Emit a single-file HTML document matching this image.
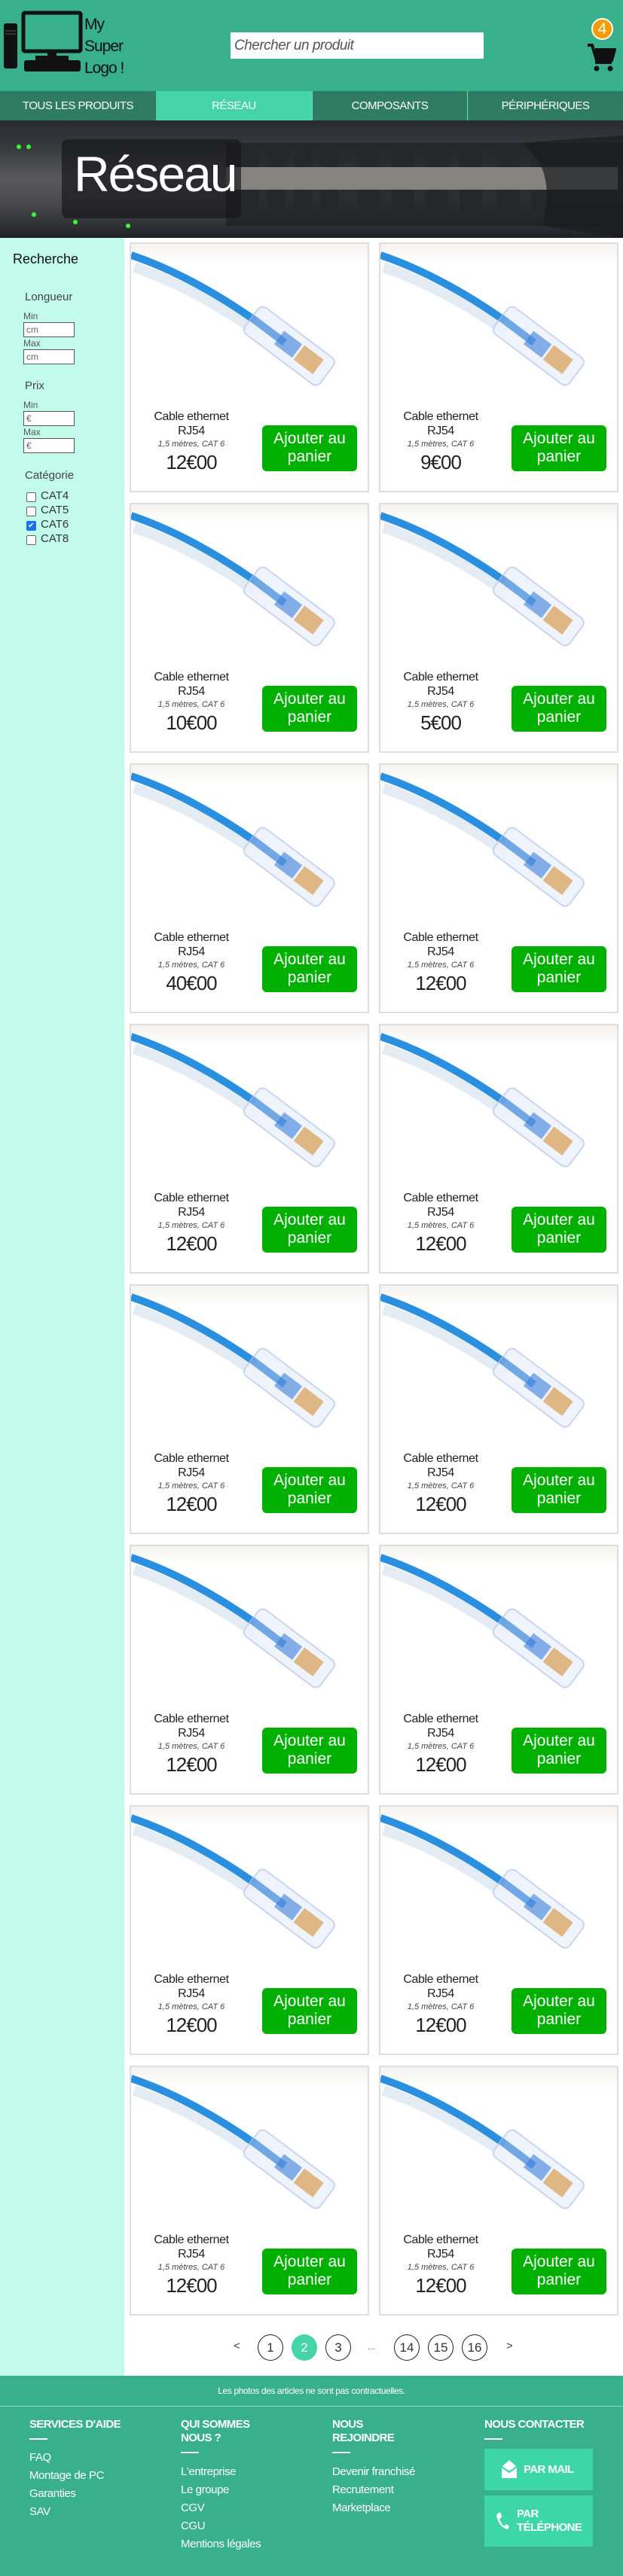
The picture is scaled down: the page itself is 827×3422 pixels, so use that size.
<!DOCTYPE html>
<html><head><meta charset="utf-8"><style>
*{margin:0;padding:0;box-sizing:border-box}
body{width:827px;height:3422px;position:relative;font-family:"Liberation Sans",sans-serif;background:#fff;overflow:hidden}
.a{position:absolute}
.hdr{left:0;top:0;width:827px;height:121px;background:#38b08c}
.nav{left:0;top:121px;width:827px;height:39px;background:#2f7c63;display:flex}
.nav div{height:39px;line-height:39px;text-align:center;color:#fff;font-size:15px;letter-spacing:-0.5px;border-left:1px solid #5ea;}
.ban{left:0;top:160px;width:827px;height:156px;background:linear-gradient(180deg,#2a2b30 0%,#3a3b40 25%,#5a5a5c 50%,#4a4a4e 70%,#202126 100%)}
.side{left:0;top:316px;width:165px;height:2840px;background:#c3fbea}
.card{width:318px;height:332px;border:2px solid #ddd;background:#fff;overflow:hidden}
.card .t{position:absolute;left:0;top:220px;width:160px;text-align:center;color:#222}
.btn{position:absolute;left:174px;top:241px;width:126px;height:61px;background:#00b000;border-radius:6px;color:#fff;font-size:21px;line-height:24px;text-align:center;padding-top:6px}
.inp{position:absolute;left:31px;width:68px;height:20px;border:1px solid #555;background:#fff;font-size:12px;color:#666;padding-left:3px;line-height:18px}
.lbl{position:absolute;left:31px;font-size:12px;color:#555}
.h{position:absolute;left:33px;font-size:15px;color:#444}
.cb{position:absolute;left:35px;width:13px;height:13px;border:1px solid #666;border-radius:2px;background:#fff}
.ct{position:absolute;left:54px;font-size:15px;color:#333}
.pg{position:absolute;top:3101px;width:34px;height:35px;border:1px solid #222;border-radius:50%;text-align:center;line-height:33px;font-size:17px;color:#333}
.ft{left:0;top:3156px;width:827px;height:266px;background:#38b08c;color:#fff}
.fh{position:absolute;font-size:15px;font-weight:bold;letter-spacing:-0.6px;line-height:18px}
.fb{position:absolute;width:24px;height:2px;background:#fff}
.fl{position:absolute;font-size:15px;line-height:24px;letter-spacing:-0.4px}
</style></head><body>
<div class="a hdr"></div>
<svg class="a" style="left:0;top:10px" width="110" height="90" viewBox="0 0 110 90">
<rect x="5" y="21" width="18" height="60" rx="3" fill="#111"/>
<rect x="7" y="30" width="14" height="2" fill="#333"/><rect x="7" y="34" width="14" height="2" fill="#333"/>
<rect x="31" y="7" width="76" height="51" rx="2" fill="none" stroke="#111" stroke-width="5"/>
<rect x="63" y="58" width="12" height="8" fill="#111"/><rect x="47" y="64" width="44" height="6" fill="#111"/>
<rect x="32" y="70" width="75" height="15" rx="3" fill="#111"/>
</svg>
<div class="a" style="left:112px;top:18px;font-size:21px;line-height:29px;color:#111;letter-spacing:-1px">My<br>Super<br>Logo !</div>
<div class="a" style="left:306px;top:43px;width:336px;height:35px;background:#fff;font-size:19px;font-style:italic;color:#555;line-height:35px;padding-left:5px;letter-spacing:-0.5px">Chercher un produit</div>
<div class="a" style="left:785px;top:24px;width:29px;height:29px;border-radius:50%;background:#f59a00;border:2px solid #fff;color:#fff;text-align:center;font-size:21px;line-height:25px">4</div>
<svg class="a" style="left:778px;top:56px" width="40" height="40" viewBox="0 0 40 40"><path d="M2 4h6l6 20h20l4-14H12" fill="none" stroke="#111" stroke-width="4"/><path d="M12 10h26l-4 14H14z" fill="#111"/><rect x="12" y="25" width="22" height="4" fill="#111"/><circle cx="14" cy="35" r="3.5" fill="#111"/><circle cx="32" cy="35" r="3.5" fill="#111"/></svg>
<div class="a nav"><div style="width:207px;border:none">TOUS LES PRODUITS</div><div style="width:207px;background:#45d4a8;border:none">RÉSEAU</div><div style="width:206px">COMPOSANTS</div><div style="width:207px">PÉRIPHÉRIQUES</div></div>
<div class="a ban"></div>
<svg class="a" style="left:0;top:160px" width="827" height="156">
<rect x="300" y="30" width="527" height="110" fill="#1e2024" opacity=".7"/>
<rect x="300" y="62" width="520" height="30" fill="#9a9894" opacity=".8"/>
<g fill="#26272b">
<rect x="320" y="40" width="24" height="22"/><rect x="355" y="40" width="24" height="22"/><rect x="390" y="40" width="24" height="22"/><rect x="425" y="40" width="24" height="22"/><rect x="475" y="40" width="30" height="22"/><rect x="520" y="40" width="30" height="22"/><rect x="565" y="40" width="30" height="22"/><rect x="610" y="40" width="30" height="22"/><rect x="660" y="40" width="30" height="22"/><rect x="705" y="40" width="30" height="22"/>
<rect x="320" y="92" width="24" height="30"/><rect x="355" y="92" width="24" height="30"/><rect x="390" y="92" width="24" height="30"/><rect x="425" y="92" width="24" height="30"/><rect x="475" y="92" width="30" height="30"/><rect x="520" y="92" width="30" height="30"/><rect x="565" y="92" width="30" height="30"/><rect x="610" y="92" width="30" height="30"/><rect x="660" y="92" width="30" height="30"/><rect x="705" y="92" width="30" height="30"/></g>
<g fill="#3f3"><circle cx="25" cy="35" r="3"/><circle cx="38" cy="35" r="3"/><circle cx="45" cy="125" r="3"/><circle cx="100" cy="135" r="3"/><circle cx="170" cy="140" r="3"/></g>
<path d="M690 30 Q740 60 720 140 L827 156 L827 20z" fill="#1a1b1e" opacity=".7"/>
</svg>
<div class="a" style="left:82px;top:185px;width:238px;height:105px;background:rgba(20,20,25,.65);border-radius:8px"></div>
<div class="a" style="left:98px;top:193px;font-size:66px;color:#fff;letter-spacing:-2px">Réseau</div>
<div class="a side"></div>
<div class="a" style="left:17px;top:334px;font-size:18px;color:#111">Recherche</div>
<div class="h" style="top:386px">Longueur</div>
<div class="lbl" style="top:413px">Min</div><div class="inp" style="top:428px">cm</div>
<div class="lbl" style="top:449px">Max</div><div class="inp" style="top:464px">cm</div>
<div class="h" style="top:504px">Prix</div>
<div class="lbl" style="top:531px">Min</div><div class="inp" style="top:546px">€</div>
<div class="lbl" style="top:567px">Max</div><div class="inp" style="top:582px">€</div>
<div class="h" style="top:623px">Catégorie</div>
<div class="cb" style="top:654px"></div><div class="ct" style="top:650px">CAT4</div>
<div class="cb" style="top:673px"></div><div class="ct" style="top:669px">CAT5</div>
<div class="cb" style="top:692px;background:#1a73e8;border-color:#1a73e8;color:#fff;font-size:10px;line-height:11px;text-align:center">✔</div><div class="ct" style="top:688px">CAT6</div>
<div class="cb" style="top:711px"></div><div class="ct" style="top:707px">CAT8</div>

<svg width="0" height="0" style="position:absolute"><defs>
<linearGradient id="bg" x1="0" y1="0" x2="0" y2="1"><stop offset="0" stop-color="#f3f2ee"/><stop offset=".12" stop-color="#fff"/></linearGradient>
<g id="cab"><rect width="318" height="215" fill="url(#bg)"/>
<path d="M0 15 C60 35 120 70 165 102" stroke="#e3ebf5" stroke-width="14" fill="none" transform="translate(4,16)"/>
<path d="M0 15 C60 35 120 70 165 102" stroke="#2b8fe0" stroke-width="10" fill="none"/>
<g transform="translate(160,98) rotate(37)"><rect x="0" y="-22" width="125" height="44" rx="8" fill="#eef2fb" stroke="#c4d0ee" stroke-width="2" opacity=".9"/><rect x="0" y="-5" width="55" height="10" fill="#3b86dc" opacity=".7"/><rect x="45" y="-12" width="30" height="22" fill="#3b7fd8" opacity=".6"/><rect x="78" y="-13" width="32" height="24" fill="#d9a35e" opacity=".75"/></g>
</g></defs></svg>
<div id="grid"></div>

<div class="a" style="left:310px;top:3108px;font-size:15px;color:#444">&lt;</div>
<div class="pg" style="left:342px">1</div>
<div class="pg" style="left:387px;background:#45d4a8;border-color:#45d4a8;color:#fff">2</div>
<div class="pg" style="left:432px">3</div>
<div class="a" style="left:488px;top:3110px;font-size:12px;color:#666">...</div>
<div class="pg" style="left:523px">14</div>
<div class="pg" style="left:568px">15</div>
<div class="pg" style="left:613px">16</div>
<div class="a" style="left:672px;top:3108px;font-size:15px;color:#444">&gt;</div>

<div class="a ft">
<div style="position:absolute;top:13px;width:827px;text-align:center;font-size:12px;letter-spacing:-0.4px">Les photos des articles ne sont pas contractuelles.</div>
<div style="position:absolute;top:40px;left:0;width:827px;height:1px;background:#8dd6be"></div>
<div class="fh" style="left:39px;top:56px">SERVICES D'AIDE</div><div class="fb" style="left:39px;top:83px"></div>
<div class="fl" style="left:39px;top:97px">FAQ<br>Montage de PC<br>Garanties<br>SAV</div>
<div class="fh" style="left:240px;top:56px">QUI SOMMES<br>NOUS ?</div><div class="fb" style="left:240px;top:101px"></div>
<div class="fl" style="left:240px;top:116px">L'entreprise<br>Le groupe<br>CGV<br>CGU<br>Mentions légales</div>
<div class="fh" style="left:441px;top:56px">NOUS<br>REJOINDRE</div><div class="fb" style="left:441px;top:101px"></div>
<div class="fl" style="left:441px;top:116px">Devenir franchisé<br>Recrutement<br>Marketplace</div>
<div class="fh" style="left:643px;top:56px">NOUS CONTACTER</div><div class="fb" style="left:643px;top:83px"></div>
<div style="position:absolute;left:643px;top:97px;width:144px;height:55px;background:#3dd6a6;font-weight:bold;font-size:15px;letter-spacing:-0.6px;line-height:55px;padding-left:52px">PAR MAIL</div>
<svg style="position:absolute;left:665px;top:111px" width="22" height="26" viewBox="0 0 22 26"><path d="M1 10 L11 1 L21 10 V25 H1z" fill="#fff"/><path d="M1 10 L11 17 L21 10" fill="none" stroke="#3dd6a6" stroke-width="2"/></svg>
<div style="position:absolute;left:643px;top:159px;width:144px;height:68px;background:#3dd6a6;font-weight:bold;font-size:15px;letter-spacing:-0.6px;line-height:18px;padding:16px 0 0 43px">PAR<br>TÉLÉPHONE</div>
<svg style="position:absolute;left:657px;top:180px" width="20" height="26" viewBox="0 0 20 26"><path d="M4 2 L8 2 L9 8 L6 10 Q8 16 12 20 L15 17 L19 20 L17 24 Q6 22 2 6z" fill="#fff"/></svg>
</div>
<script>
var p=[[12,9],[10,5],[40,12],[12,12],[12,12],[12,12],[12,12],[12,12]],h='';
p.forEach(function(r,i){r.forEach(function(v,j){
h+='<div class="a card" style="left:'+(j?503:172)+'px;top:'+(322+i*346)+'px"><svg width="318" height="215" style="position:absolute;left:0;top:0"><use href="#cab"/></svg>'+
'<div class="t"><div style="font-size:16px;line-height:19px;letter-spacing:-0.4px">Cable ethernet<br>RJ54</div><div style="font-size:11px;font-style:italic;color:#444;line-height:16px">1,5 mètres, CAT 6</div><div style="font-size:26px;line-height:32px;letter-spacing:-1px">'+v+'€00</div></div><div class="btn">Ajouter au<br>panier</div></div>';});});
document.getElementById('grid').innerHTML=h;
</script>
</body></html>
